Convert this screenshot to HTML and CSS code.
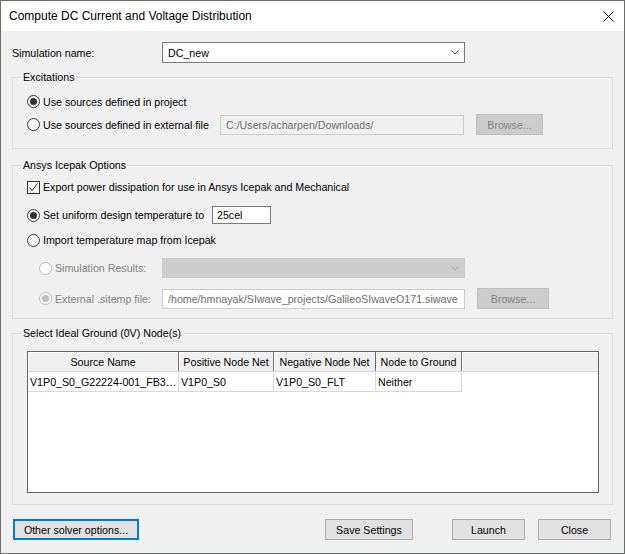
FILE: index.html
```html
<!DOCTYPE html>
<html>
<head>
<meta charset="utf-8">
<title>Compute DC Current and Voltage Distribution</title>
<link rel="stylesheet" href="styles.css">
</head>
<body>
<div class="window">
  <div class="titlebar">
    <span class="title">Compute DC Current and Voltage Distribution</span>
    <span class="close"><svg width="11" height="11" viewBox="0 0 11 11"><path d="M0.5 0.5 L10.5 10.5 M10.5 0.5 L0.5 10.5" stroke="#000" stroke-width="1" fill="none"/></svg></span>
  </div>
  <div class="content">
    <div class="row simrow">
      <span class="label">Simulation name:</span>
      <div class="combo">
        <span class="combo-text">DC_new</span>
        <svg class="chev" width="8" height="5" viewBox="0 0 8 5"><path d="M0.5 0.5 L4 4 L7.5 0.5" stroke="#505050" stroke-width="1" fill="none"/></svg>
      </div>
    </div>

    <fieldset class="group exc">
      <legend>Excitations</legend>
      <div class="row h21">
        <span class="radio on"></span><span>Use sources defined in project</span>
      </div>
      <div class="row h21 mt2">
        <span class="opt w193"><span class="radio"></span><span>Use sources defined in external file</span></span>
        <div class="input dis w244">C:/Users/acharpen/Downloads/</div>
        <div class="btn dis w67 ml12">Browse...</div>
      </div>
    </fieldset>

    <fieldset class="group ice">
      <legend>Ansys Icepak Options</legend>
      <div class="row h20">
        <span class="check"><svg width="11" height="11" viewBox="0 0 11 11"><path d="M1.5 5.5 L4 8.5 L9.5 1.5" stroke="#202020" stroke-width="1" fill="none"/></svg></span><span>Export power dissipation for use in Ansys Icepak and Mechanical</span>
      </div>
      <div class="row h20 mt8">
        <span class="radio on"></span><span class="w164">Set uniform design temperature to</span>
        <div class="input temp">25cel</div>
      </div>
      <div class="row h20 mt5">
        <span class="radio"></span><span>Import temperature map from Icepak</span>
      </div>
      <div class="row h20 mt8">
        <span class="opt w123 ml12 distext"><span class="radio dis"></span><span>Simulation Results:</span></span>
        <div class="combo dis h20">
          <span class="combo-text"></span>
          <svg class="chev" width="8" height="5" viewBox="0 0 8 5"><path d="M0.5 0.5 L4 4 L7.5 0.5" stroke="#a8a8a8" stroke-width="1" fill="none"/></svg>
        </div>
      </div>
      <div class="row h21 mt10">
        <span class="opt w123 ml12 distext"><span class="radio dis on"></span><span>External .sitemp file:</span></span>
        <div class="input ro w303">/home/hmnayak/SIwave_projects/GalileoSIwaveO171.siwave</div>
        <div class="btn dis w72 ml12">Browse...</div>
      </div>
    </fieldset>

    <fieldset class="group gnd">
      <legend>Select Ideal Ground (0V) Node(s)</legend>
      <div class="table">
        <div class="thead">
          <div class="th c1">Source Name</div>
          <div class="th c2">Positive Node Net</div>
          <div class="th c3">Negative Node Net</div>
          <div class="th c4">Node to Ground</div>
          <div class="th rest"></div>
        </div>
        <div class="tr">
          <div class="td c1">V1P0_S0_G22224-001_FB3…</div>
          <div class="td c2">V1P0_S0</div>
          <div class="td c3">V1P0_S0_FLT</div>
          <div class="td c4">Neither</div>
        </div>
      </div>
    </fieldset>

    <div class="row buttons">
      <div class="btn focus w126">Other solver options...</div>
      <div class="spacer"></div>
      <div class="btn w88">Save Settings</div>
      <div class="btn w73 ml39">Launch</div>
      <div class="btn w73 ml13">Close</div>
    </div>
  </div>
</div>
</body>
</html>
```
FILE: styles.css
```css
html, body {
  margin: 0;
  padding: 0;
  background: #f0f0f0;
}

.window {
  width: 625px;
  height: 554px;
  box-sizing: border-box;
  border: 1px solid #6a7066;
  background: #f0f0f0;
  display: flex;
  flex-direction: column;
  font-family: "Liberation Sans", Arial, sans-serif;
  font-size: 10.67px;
  color: #000;
  overflow: hidden;
}

.titlebar {
  height: 30px;
  flex: none;
  background: #fff;
  display: flex;
  align-items: center;
  padding-left: 8px;
}

.title {
  font-size: 12px;
  flex: 1;
  white-space: nowrap;
}

.close {
  width: 30px;
  display: flex;
  justify-content: center;
  align-items: center;
  margin-right: 1px;
}

.close svg {
  display: block;
}

.content {
  padding: 11px 11px 0 11px;
  display: flex;
  flex-direction: column;
}

.row {
  display: flex;
  align-items: center;
  white-space: nowrap;
}

.h20 { height: 20px; }
.h21 { height: 21px; }
.mt2 { margin-top: 2px; }
.mt5 { margin-top: 5px; }
.mt8 { margin-top: 8px; }
.mt10 { margin-top: 10px; }
.ml12 { margin-left: 12px; }
.ml13 { margin-left: 13px; }
.ml39 { margin-left: 39px; }

.simrow {
  height: 21px;
}

.label {
  width: 150px;
  flex: none;
}

.combo {
  box-sizing: border-box;
  width: 303px;
  height: 21px;
  border: 1px solid #7a7a7a;
  background: #fff;
  display: flex;
  align-items: center;
  padding-left: 5px;
  padding-right: 5px;
}

.combo.dis {
  height: 20px;
  background: #cccccc;
  border-color: #cccccc;
}

.combo-text {
  flex: 1;
}

.chev {
  display: block;
  flex: none;
}

/* Group boxes */
.group {
  margin: 0;
  min-width: 0;
  border: 1px solid #dcdcdc;
  padding: 7px 0 13px 14px;
}

.group legend {
  line-height: 14px;
  height: 14px;
  padding: 0 2px;
  margin-left: -6px;
}

.exc {
  margin-top: 7px;
}

.ice {
  margin-top: 9px;
  padding: 5px 0 9px 14px;
}

.gnd {
  margin-top: 7px;
  padding: 11px 13px 11px 14px;
}

.opt {
  display: flex;
  align-items: center;
  flex: none;
}

.w123 { width: 123px; }
.w164 { width: 164px; flex: none; }
.w193 { width: 193px; }

.distext {
  color: #838383;
}

/* radio & check */
.radio {
  width: 13px;
  height: 13px;
  box-sizing: border-box;
  border: 1px solid #333;
  border-radius: 50%;
  background: #fff;
  margin-right: 3px;
  flex: none;
  display: flex;
  align-items: center;
  justify-content: center;
}

.radio.on::after {
  content: "";
  width: 7px;
  height: 7px;
  border-radius: 50%;
  background: #333;
}

.radio.dis {
  border-color: #bcbcbc;
}

.radio.dis.on::after {
  background: #bcbcbc;
}

.check {
  width: 13px;
  height: 13px;
  box-sizing: border-box;
  border: 1px solid #333;
  background: #fff;
  margin-right: 3px;
  flex: none;
  display: flex;
  align-items: center;
  justify-content: center;
}

.check svg {
  display: block;
}

/* inputs */
.input {
  box-sizing: border-box;
  height: 20px;
  border: 1px solid #7a7a7a;
  background: #fff;
  padding-left: 4px;
  display: flex;
  align-items: center;
  overflow: hidden;
  white-space: nowrap;
  flex: none;
}

.input.dis {
  border-color: #cccccc;
  background: #f0f0f0;
  color: #6d6d6d;
  padding-left: 5px;
}

.input.ro {
  border-color: #cccccc;
  background: #fff;
  color: #6d6d6d;
  padding-left: 5px;
}

.input.temp {
  width: 59px;
  height: 18px;
  margin-left: 5px;
}

.w244 { width: 244px; }
.w303 { width: 303px; }

/* buttons */
.btn {
  box-sizing: border-box;
  height: 21px;
  border: 1px solid #adadad;
  background: #e1e1e1;
  display: flex;
  align-items: center;
  justify-content: center;
  white-space: nowrap;
  flex: none;
}

.btn.dis {
  background: #cccccc;
  border-color: #bfbfbf;
  color: #838383;
}

.btn.focus {
  border: 2px solid #0078d7;
}

.w67 { width: 67px; }
.w72 { width: 72px; }
.w73 { width: 73px; }
.w88 { width: 88px; }
.w126 { width: 126px; }

.buttons {
  margin-top: 14px;
  height: 21px;
  padding-left: 1px;
  padding-right: 2px;
}

.spacer {
  flex: 1;
}

/* table */
.table {
  box-sizing: border-box;
  height: 142px;
  border: 1px solid #646464;
  background: #fff;
}

.thead {
  display: flex;
  height: 19px;
  background: #f0f0f0;
  border-bottom: 1px solid #d8d8d8;
}

.th {
  box-sizing: border-box;
  height: 100%;
  border-right: 1px solid #6e6e6e;
  box-shadow: inset 1px 1px 0 #ffffff;
  display: flex;
  align-items: center;
  justify-content: center;
  white-space: nowrap;
  overflow: hidden;
  flex: none;
}

.th.rest {
  flex: 1;
  border-right: none;
}

.tr {
  display: flex;
  height: 20px;
}

.td {
  box-sizing: border-box;
  height: 100%;
  border-right: 1px solid #d8d8d8;
  border-bottom: 1px solid #d8d8d8;
  display: flex;
  align-items: center;
  padding-left: 2px;
  white-space: nowrap;
  overflow: hidden;
  flex: none;
}

.c1 { width: 151px; }
.c2 { width: 95px; }
.c3 { width: 102px; }
.c4 { width: 86px; }
```
